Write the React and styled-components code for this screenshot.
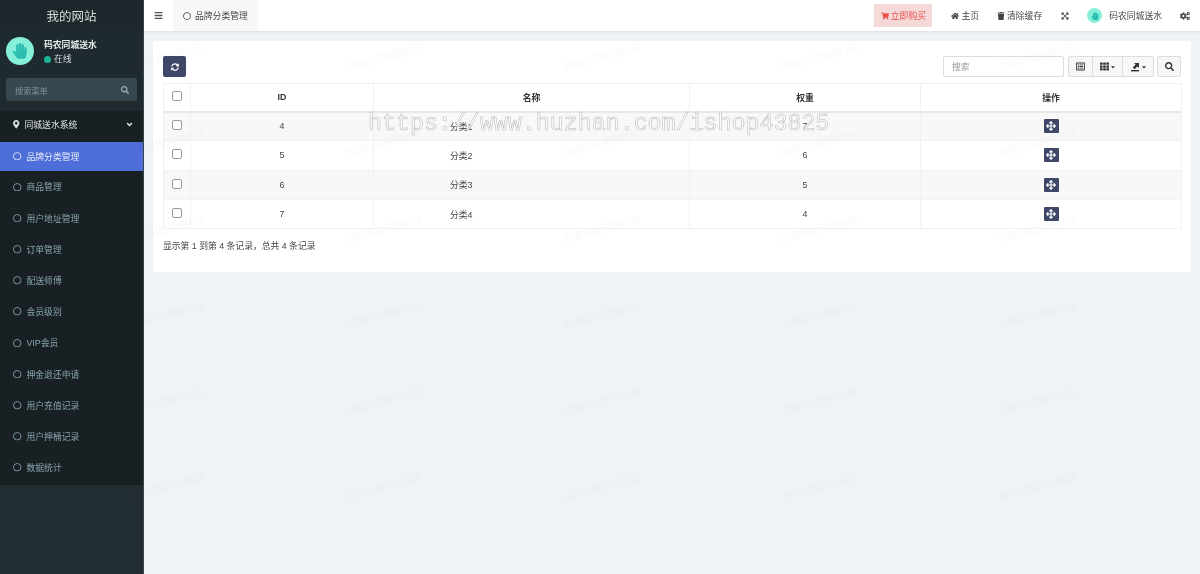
import React from 'react';
import styled, { createGlobalStyle } from 'styled-components';
import { FaBars, FaRegCircle, FaHandPaper, FaSearch, FaMapMarkerAlt, FaAngleDown, FaShoppingCart, FaHome, FaTrash, FaCogs, FaSyncAlt, FaArrowsAlt, FaTh, FaCaretDown, FaRegListAlt, FaExpandArrowsAlt } from 'react-icons/fa';

const FONT = '"Liberation Sans", "Noto Sans CJK SC", sans-serif';

const Global = createGlobalStyle`
  html, body { margin: 0; padding: 0; height: 100%; overflow: hidden; background: #f0f3f6; }
  body { font-family: ${FONT}; font-size: 8.8px; color: #555; }
  * { box-sizing: border-box; }
`;

const Page = styled.div`
  position: relative;
  display: flex;
  width: 1200px;
  height: 574px;
  overflow: hidden;
  will-change: transform;
`;

const Sidebar = styled.aside`
  width: 144px;
  flex: none;
  background: #222d32;
  display: flex;
  flex-direction: column;
  border-right: 1px solid #3b4448;
`;

const Logo = styled.div`
  height: 31px;
  display: flex;
  align-items: center;
  justify-content: center;
  color: #d6dadc;
  font-size: 12.5px;
  background: #1e282c;
`;

const UserPanel = styled.div`
  height: 47px;
  padding: 6px 6px 0;
  display: flex;
  gap: 10px;
  background: #1f2a2f;
`;

const Avatar = styled.div`
  width: ${p => p.$size}px;
  height: ${p => p.$size}px;
  border-radius: 50%;
  background: #86efd9;
  color: #2bbdb0;
  display: flex;
  align-items: center;
  justify-content: center;
  flex: none;
  font-size: ${p => p.$size * 0.56}px;
`;

const UserInfo = styled.div`
  padding-top: 1px;
  color: #e4e8ea;
  font-weight: 700;
  line-height: 14px;
`;

const Status = styled.div`
  display: flex;
  align-items: center;
  gap: 3px;
  font-weight: 400;
  color: #cfd6d9;
`;

const Dot = styled.i`
  width: 7px;
  height: 7px;
  border-radius: 50%;
  background: #1cb394;
`;

const SideSearchWrap = styled.div`
  background: #1f2a2f;
  padding: 0 6px 10px;
  height: 33px;
`;

const SideSearch = styled.div`
  height: 23px;
  border-radius: 2px;
  background: #374850;
  color: #7f929b;
  display: flex;
  align-items: center;
  justify-content: space-between;
  padding: 0 8px 0 9px;
  font-size: 8.2px;
  svg { font-size: 8px; color: #a3b0b6; }
`;

const Menu = styled.nav`
  background: #182024;
  display: flex;
  flex-direction: column;
  height: 374px;
`;

const MenuHead = styled.div`
  height: 29px;
  flex: none;
  display: flex;
  align-items: center;
  gap: 4px;
  padding: 0 9px 2px 12px;
  margin-bottom: 1.5px;
  color: #dfe4e6;
  svg:last-child { margin-left: auto; font-size: 9px; }
  svg:first-child { font-size: 8.5px; }
`;

const MenuItem = styled.div`
  height: ${p => (p.$active ? '29px' : '31.2px')};
  margin-bottom: ${p => (p.$active ? '0.9px' : '0')};
  flex: none;
  display: flex;
  align-items: center;
  gap: 5px;
  padding-left: 13px;
  color: ${p => (p.$active ? '#e8ecf8' : '#8aa4af')};
  background: ${p => (p.$active ? '#4e6fd9' : 'transparent')};
  svg { font-size: 8.5px; }
`;

const Main = styled.main`
  flex: 1;
  min-width: 0;
  display: flex;
  flex-direction: column;
`;

const TopBar = styled.header`
  height: 31px;
  background: #fff;
  display: flex;
  align-items: center;
  box-shadow: 0 1px 2px rgba(0, 0, 0, 0.08);
  color: #444;
  padding-right: 10px;
`;

const Burger = styled.div`
  width: 29px;
  display: flex;
  justify-content: center;
  font-size: 9px;
  color: #555;
`;

const Tab = styled.div`
  width: 85px;
  height: 31px;
  background: #f8f8f8;
  display: flex;
  align-items: center;
  gap: 4px;
  padding-left: 10px;
  svg { font-size: 8px; color: #444; }
`;

const TopRight = styled.div`
  margin-left: auto;
  display: flex;
  align-items: center;
`;

const BuyButton = styled.div`
  width: 58px;
  height: 23px;
  background: #f5d8d8;
  color: #e7534a;
  display: flex;
  align-items: center;
  justify-content: center;
  gap: 2px;
  margin-right: 19px;
  svg { font-size: 8px; }
`;

const TopLink = styled.div`
  display: flex;
  align-items: center;
  gap: 2px;
  margin-right: ${p => p.$gap}px;
  svg { font-size: 8px; }
`;

const GearLink = styled(TopLink)`
  svg { font-size: 10px; }
`;

const Content = styled.section`
  flex: 1;
  padding: 10px 9px 0;
`;

const Card = styled.div`
  height: 231px;
  background: #fff;
  border-radius: 2px;
  padding: 15px 10px 0;
`;

const Toolbar = styled.div`
  height: 21px;
  display: flex;
  align-items: stretch;
  margin-bottom: 6px;
`;

const DarkButton = styled.div`
  background: #3e4767;
  color: #fff;
  border-radius: ${p => p.$radius}px;
  display: flex;
  align-items: center;
  justify-content: center;
  width: ${p => p.$w}px;
  height: ${p => p.$h}px;
  font-size: ${p => p.$icon}px;
  margin: 0 auto;
`;

const RefreshWrap = styled.div`
  margin-right: auto;
`;

const SearchInput = styled.div`
  width: 121px;
  border: 1px solid #ddd;
  border-radius: 2px;
  display: flex;
  align-items: center;
  padding-left: 8px;
  color: #999;
  margin-right: 4px;
`;

const BtnGroup = styled.div`
  display: flex;
  margin-right: 4px;
`;

const ToolBtn = styled.div`
  width: ${p => p.$w}px;
  background: #f6f7f8;
  border: 1px solid #ddd;
  margin-left: -1px;
  border-radius: ${p => p.$radius || '0'};
  display: flex;
  align-items: center;
  justify-content: center;
  color: #333;
  font-size: 9px;
  &:first-child { margin-left: 0; }
`;

const Caret = styled(FaCaretDown)`
  font-size: 6px;
  margin-left: 1px;
`;

const Table = styled.table`
  width: 1018px;
  border-collapse: collapse;
  table-layout: fixed;
  border: 1px solid #eff1f3;
`;

const Th = styled.th`
  height: 28px;
  border: 1px solid #eff1f3;
  border-bottom: 2px solid #e6e8ea;
  font-weight: 700;
  color: #333;
  text-align: center;
  padding: 0;
  font-size: 8.8px;
`;

const Row = styled.tr`
  background: ${p => (p.$odd ? '#f8f8f8' : '#fff')};
`;

const Td = styled.td`
  height: 29.3px;
  border: 1px solid #f1f2f4;
  border-width: 1px 0;
  border-right: 1px solid #f1f2f4;
  text-align: ${p => (p.$left ? 'left' : 'center')};
  padding: 0 0 0 ${p => (p.$left ? '76px' : '0')};
  color: #444;
`;

const Check = styled.span`
  display: block;
  width: 10px;
  height: 10px;
  margin: 0 auto;
  position: relative;
  top: -1px;
  border: 1px solid #9a9a9a;
  border-radius: 2px;
  background: #fff;
`;

const Summary = styled.div`
  margin-top: 11px;
  color: #444;
  line-height: 12px;
`;

const WatermarkLayer = styled.div`
  position: absolute;
  left: 56px;
  top: 13px;
  display: grid;
  grid-template-columns: repeat(5, 218px);
  grid-auto-rows: 86px;
  pointer-events: none;
`;

const Mark = styled.span`
  font-size: 10px;
  color: rgba(70, 80, 90, 0.04);
  transform: rotate(-15deg);
  display: flex;
  align-items: center;
  justify-content: center;
  white-space: nowrap;
`;

const UrlStamp = styled.div`
  position: absolute;
  left: 368px;
  top: 108px;
  font-family: "Liberation Mono", monospace;
  font-size: 23.3px;
  line-height: 32px;
  color: rgba(255, 255, 255, 0.6);
  -webkit-text-stroke: 0.5px #b4b4b4;
  pointer-events: none;
  white-space: nowrap;
`;

const ExportIcon = () => (
  <svg width="10" height="10" viewBox="0 0 10 10" fill="currentColor">
    <path d="M1 8h8v1.4H1z" />
    <path d="M4 1h5v5L7.4 4.4 4.6 7.2 2.8 5.4l2.8-2.8z" />
  </svg>
);

const items = ['商品管理', '用户地址管理', '订单管理', '配送师傅', '会员级别', 'VIP会员', '押金退还申请', '用户充值记录', '用户押桶记录', '数据统计'];
const rows = [
  { id: 4, name: '分类1', w: 7 },
  { id: 5, name: '分类2', w: 6 },
  { id: 6, name: '分类3', w: 5 },
  { id: 7, name: '分类4', w: 4 },
];

export default function App() {
  return (
    <Page>
      <Global />
      <Sidebar>
        <Logo>我的网站</Logo>
        <UserPanel>
          <Avatar $size={28}><FaHandPaper /></Avatar>
          <UserInfo>
            码农同城送水
            <Status><Dot />在线</Status>
          </UserInfo>
        </UserPanel>
        <SideSearchWrap>
          <SideSearch>搜索菜单<FaSearch /></SideSearch>
        </SideSearchWrap>
        <Menu>
          <MenuHead><FaMapMarkerAlt />同城送水系统<FaAngleDown /></MenuHead>
          <MenuItem $active><FaRegCircle />品牌分类管理</MenuItem>
          {items.map(t => <MenuItem key={t}><FaRegCircle />{t}</MenuItem>)}
        </Menu>
      </Sidebar>
      <Main>
        <TopBar>
          <Burger><FaBars /></Burger>
          <Tab><FaRegCircle />品牌分类管理</Tab>
          <TopRight>
            <BuyButton><FaShoppingCart />立即购买</BuyButton>
            <TopLink $gap={18}><FaHome />主页</TopLink>
            <TopLink $gap={19}><FaTrash />清除缓存</TopLink>
            <TopLink $gap={18}><FaExpandArrowsAlt /></TopLink>
            <TopLink $gap={7}><Avatar $size={15}><FaHandPaper /></Avatar></TopLink>
            <TopLink $gap={18}>码农同城送水</TopLink>
            <GearLink $gap={0}><FaCogs /></GearLink>
          </TopRight>
        </TopBar>
        <Content>
          <Card>
            <Toolbar>
              <RefreshWrap><DarkButton $w={23} $h={21} $icon={8} $radius={2}><FaSyncAlt /></DarkButton></RefreshWrap>
              <SearchInput>搜索</SearchInput>
              <BtnGroup>
                <ToolBtn $w={25} $radius="2px 0 0 2px"><FaRegListAlt /></ToolBtn>
                <ToolBtn $w={31}><FaTh /><Caret /></ToolBtn>
                <ToolBtn $w={32} $radius="0 2px 2px 0"><ExportIcon /><Caret /></ToolBtn>
              </BtnGroup>
              <ToolBtn $w={24} $radius="2px"><FaSearch /></ToolBtn>
            </Toolbar>
            <Table>
              <colgroup>
                <col style={{ width: 27 }} />
                <col style={{ width: 183 }} />
                <col style={{ width: 316 }} />
                <col style={{ width: 231 }} />
                <col style={{ width: 261 }} />
              </colgroup>
              <thead>
                <tr>
                  <Th><Check /></Th>
                  <Th>ID</Th>
                  <Th>名称</Th>
                  <Th>权重</Th>
                  <Th>操作</Th>
                </tr>
              </thead>
              <tbody>
                {rows.map((r, i) => (
                  <Row key={r.id} $odd={i % 2 === 0}>
                    <Td><Check /></Td>
                    <Td>{r.id}</Td>
                    <Td $left>{r.name}</Td>
                    <Td>{r.w}</Td>
                    <Td><DarkButton $w={15} $h={14} $icon={10} $radius={1}><FaArrowsAlt /></DarkButton></Td>
                  </Row>
                ))}
              </tbody>
            </Table>
            <Summary>显示第 1 到第 4 条记录，总共 4 条记录</Summary>
          </Card>
        </Content>
      </Main>
      <WatermarkLayer>
        {Array.from({ length: 30 }).map((_, i) => <Mark key={i}>河南码农网络科技</Mark>)}
      </WatermarkLayer>
      <UrlStamp>https://www.huzhan.com/ishop43825</UrlStamp>
    </Page>
  );
}
